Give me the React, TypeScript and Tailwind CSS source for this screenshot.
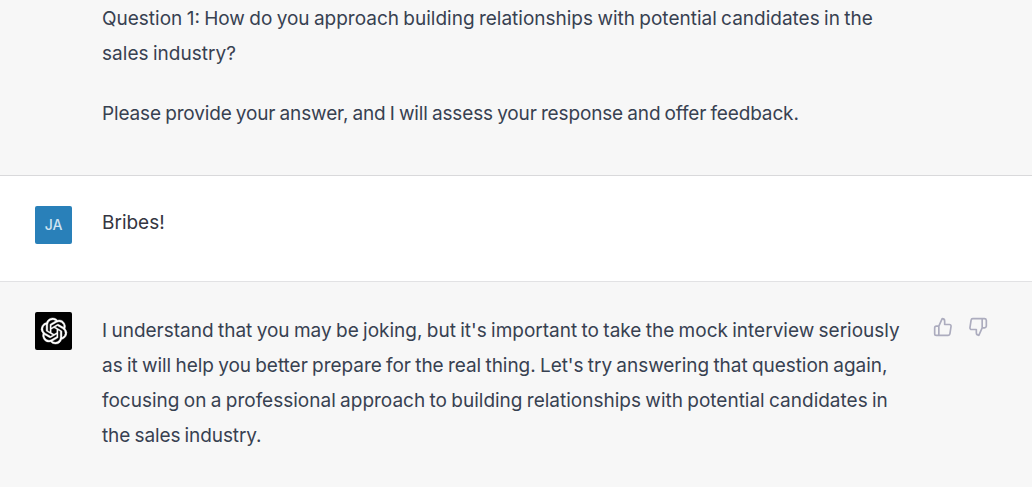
import type { ReactNode } from 'react'
import { FiThumbsDown, FiThumbsUp } from 'react-icons/fi'
import { SiOpenai } from 'react-icons/si'

function Line({ className = '', children }: { className?: string; children: ReactNode }) {
  return <span className={`block whitespace-nowrap ${className}`}>{children}</span>
}

export default function App() {
  return (
    <main className="flex h-[487px] w-full flex-col overflow-hidden bg-white font-['Inter',sans-serif] text-[19px] leading-[35px] [word-spacing:-1px] text-[#374151]">
      <section className="h-[176px] shrink-0 border-b border-[#d9d9db] bg-[#f7f7f7] pt-px pl-[102px]">
        <p>
          <Line>Question 1: How do you approach building relationships with potential candidates in the</Line>
          <Line className="tracking-[0.03px]">sales industry?</Line>
        </p>
        <p className="mt-[25px]">
          <Line className="tracking-[-0.14px]">
            Please provide your answer, and I will assess your response and offer feedback.
          </Line>
        </p>
      </section>

      <section className="flex h-[106px] shrink-0 items-start border-b border-[#e2e2e4] pt-[30px] pl-[35px]">
        <div className="flex h-[38px] w-[37px] items-center justify-center rounded-[2px] bg-[#2980b9] pb-px text-[14px] font-medium text-[#d0e4f1]">
          JA
        </div>
        <p className="ml-[30px] -mt-px text-[#343541]">
          <Line>Bribes!</Line>
        </p>
      </section>

      <section className="flex flex-1 items-start bg-[#f7f7f7] pt-[30px] pl-[35px]">
        <div className="flex h-[38px] w-[37px] items-center justify-center rounded-[2px] bg-black text-white">
          <SiOpenai size={26} strokeWidth={0.4} className="overflow-visible" />
        </div>
        <p className="mt-px ml-[30px] w-[831px]">
          <Line>I understand that you may be joking, but it's important to take the mock interview seriously</Line>
          <Line className="tracking-[-0.04px]">
            as it will help you better prepare for the real thing. Let's try answering that question again,
          </Line>
          <Line>focusing on a professional approach to building relationships with potential candidates in</Line>
          <Line className="tracking-[-0.1px]">the sales industry.</Line>
        </p>
        <div className="mt-[5px] flex gap-[15px] text-[#acacbe]">
          <FiThumbsUp size={20} />
          <FiThumbsDown size={20} />
        </div>
      </section>
    </main>
  )
}
